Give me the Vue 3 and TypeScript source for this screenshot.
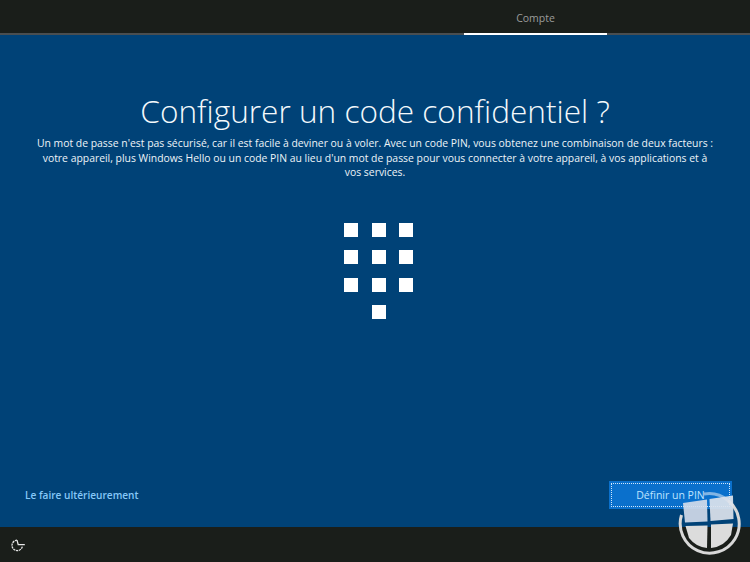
<script setup lang="ts">
const keys: number[] = [1, 2, 3, 4, 5, 6, 7, 8, 9, 10];
</script>

<template>
  <div class="screen">
    <header class="topbar">
      <div class="tab">Compte</div>
    </header>
    <main class="main">
      <h1 class="title">Configurer un code confidentiel ?</h1>
      <p class="desc">Un mot de passe n'est pas sécurisé, car il est facile à deviner ou à voler. Avec un code PIN, vous obtenez une combinaison de deux facteurs : votre appareil, plus Windows Hello ou un code PIN au lieu d'un mot de passe pour vous connecter à votre appareil, à vos applications et à vos services.</p>
      <div class="keypad">
        <span v-for="k in keys" :key="k" class="key" :class="{ last: k === 10 }"></span>
      </div>
      <div class="actions">
        <a class="later">Le faire ultérieurement</a>
        <button class="primary"><span>Définir un PIN</span></button>
      </div>
    </main>
    <footer class="bottombar">
      <svg class="access" width="16" height="16" viewBox="0 0 16 16" fill="none" stroke="#e8e8e8" stroke-width="1.3">
        <path d="M7 3.2 A5.2 5.2 0 1 0 12.4 9" stroke-dasharray="2.2 .7" />
        <path d="M7 3.2 L8.2 7.6 L14.8 7.6" />
      </svg>
    </footer>
    <svg class="badge" width="66" height="66" viewBox="0 0 66 66">
      <path d="M3.5 24 A29.5 29.5 0 1 0 50 9.5" fill="none" stroke="#d8d8d8" stroke-width="3" />
      <path d="M26 3 A29.5 29.5 0 0 1 50 9.5" fill="none" stroke="#e8eef5" stroke-opacity=".55" stroke-width="3" />
      <path d="M5 12 L29 8.5 L29.5 30.5 L7 31.5 Z" fill="#d6deeb" fill-opacity=".9" />
      <path d="M31.5 8 L55 4.5 L55.5 28 L32.5 30 Z" fill="#dde3ec" fill-opacity=".92" />
      <path d="M7.5 35 L29.5 34.5 L29 57 A26 26 0 0 1 11 47 Z" fill="#dcdcdc" />
      <path d="M33 33.5 L55 32.5 L53 44 A26 26 0 0 1 33 57 Z" fill="#dcdcdc" />
    </svg>
  </div>
</template>

<style>
html, body { margin: 0; background: #1a1e1a; }
</style>

<style scoped>
.screen {
  position: relative;
  width: 750px;
  height: 562px;
  overflow: hidden;
  display: flex;
  flex-direction: column;
  font-family: "Open Sans", "Liberation Sans", sans-serif;
  background: #1a1e1a;
}
.topbar {
  height: 33px;
  flex: none;
  display: flex;
  justify-content: flex-end;
  padding-right: 143px;
  border-bottom: 2px solid #4a4e50;
}
.tab {
  width: 143px;
  height: 35px;
  box-sizing: border-box;
  border-bottom: 2px solid #ffffff;
  text-align: center;
  color: #9a9c9a;
  font-size: 10.5px;
  line-height: 36px;
}
.main {
  flex: 1;
  background: #004277;
  color: #fff;
  display: flex;
  flex-direction: column;
  align-items: center;
  min-height: 0;
}
.title {
  margin: 56px 0 0;
  font-size: 31.6px;
  font-weight: 300;
  line-height: 40px;
  color: #f4f9fc;
}
.desc {
  width: 680px;
  margin: 5px 0 0;
  text-align: center;
  font-size: 10.4px;
  line-height: 14.5px;
  color: #eef4f8;
}
.keypad {
  display: grid;
  grid-template-columns: repeat(3, 14px);
  grid-auto-rows: 14px;
  gap: 13.5px;
  margin: 43px 0 0 7px;
}
.key { background: #fff; }
.key.last { grid-column: 2; }
.actions {
  margin-top: auto;
  width: 100%;
  box-sizing: border-box;
  padding: 0 18px 18px 25px;
  display: flex;
  justify-content: space-between;
  align-items: center;
}
.later {
  color: #86c8f8;
  font-size: 10.1px;
  font-weight: 600;
}
.primary {
  width: 123px;
  height: 28px;
  padding: 2px;
  border: 0;
  background: #0a70cc;
  color: #bfe4ff;
  font-family: inherit;
  font-size: 10.5px;
}
.primary span {
  display: flex;
  align-items: center;
  justify-content: center;
  height: 100%;
  box-sizing: border-box;
  border: 1px dotted #cfe6fa;
}
.bottombar {
  height: 35px;
  flex: none;
  display: flex;
  align-items: center;
  padding-left: 10px;
}
.access { display: block; }
.badge {
  position: absolute;
  left: 678px;
  top: 491px;
}
</style>
